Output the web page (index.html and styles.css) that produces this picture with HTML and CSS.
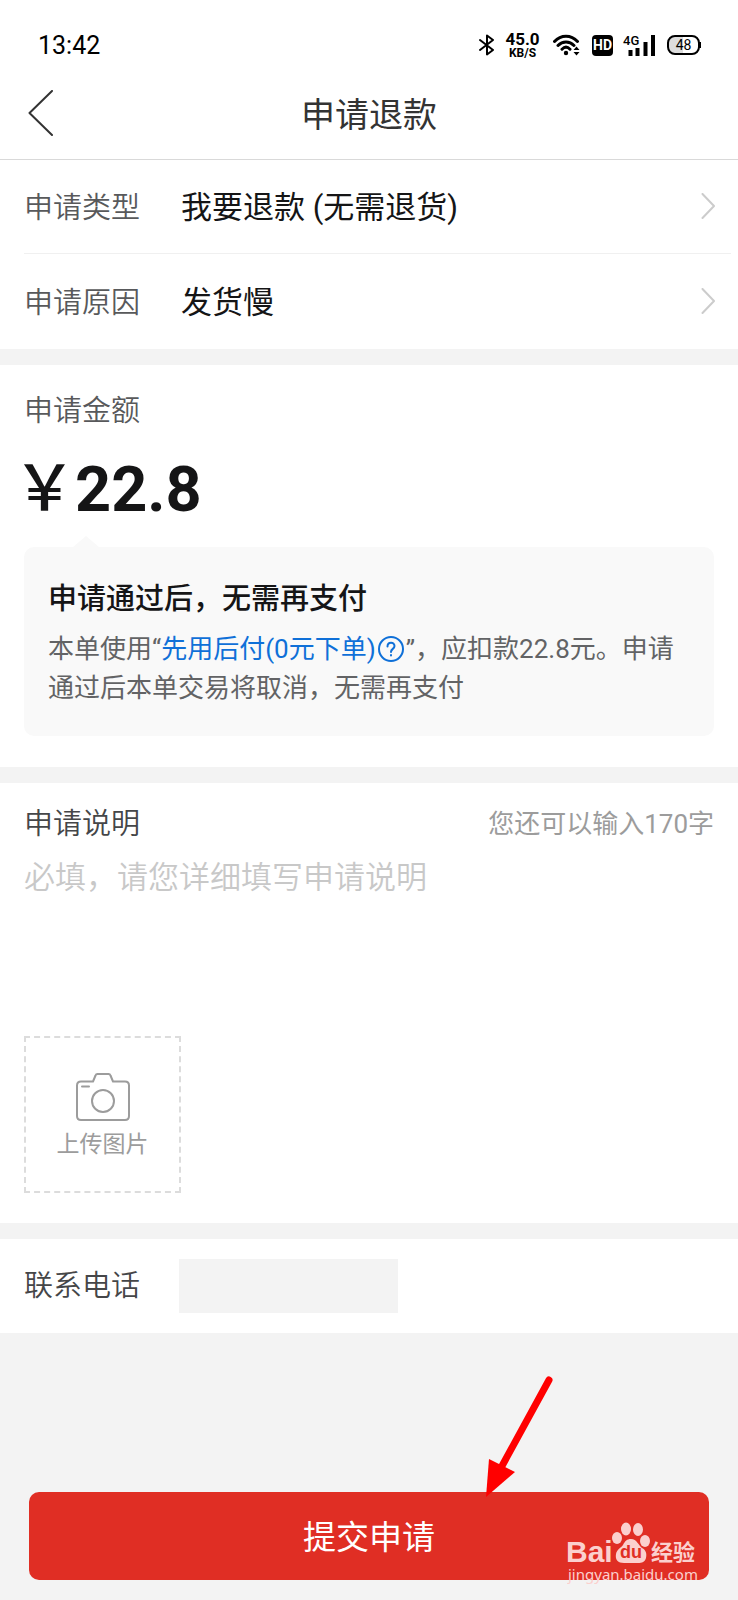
FILE: index.html
```html
<!DOCTYPE html>
<html lang="zh-CN">
<head>
<meta charset="utf-8">
<meta name="viewport" content="width=device-width, initial-scale=1">
<title>申请退款</title>
<link rel="stylesheet" href="styles.css">
</head>
<body>
<form class="page">
  <div class="status">
    <time class="clock">13:42</time>
    <div class="indicators">
      <svg class="bluetooth" width="16" height="22" viewBox="0 0 16 22" aria-label="蓝牙"><path d="M1 6l13 10-6 4.500V1.500L14 6 1 16" /></svg>
      <div class="speed"><span class="speed-value">45.0</span><span class="speed-unit">KB/S</span></div>
      <svg class="wifi" width="28" height="22" viewBox="0 0 28 22" aria-label="无线网络"><path class="arc" d="M1.500 7.500C8 .5 18 .5 24.500 7.500M5 11.500c4.500-4.800 11.500-4.800 16 0M9 15.200c2.500-2.500 5.500-2.500 8 0"/><circle cx="13" cy="19" r="2.200"/><path d="M20.500 16l3-3.500 3 3.500zM20.500 18l3 3.500 3-3.500z"/></svg>
      <span class="hd">HD</span>
      <div class="signal">
        <span class="network">4G</span>
        <svg width="30" height="22" viewBox="0 0 30 22" aria-label="信号"><path d="M5.500 16v6M12.500 14v8M20.500 8v14M28 1v21"/></svg>
      </div>
      <div class="battery"><span>48</span></div>
    </div>
  </div>

  <header class="header">
    <button class="back" type="button" aria-label="返回"><svg width="26" height="46" viewBox="0 0 26 46"><path d="M24 1L1.500 23 24 45"/></svg></button>
    <h1 class="title">申请退款</h1>
  </header>

  <section class="panel options">
    <button class="row" type="button">
      <span class="label">申请类型</span><span class="value">我要退款 (无需退货)</span>
      <svg class="chevron" width="14" height="26" viewBox="0 0 14 26"><path d="M1.500 1L13 13 1.500 25"/></svg>
    </button>
    <button class="row" type="button">
      <span class="label">申请原因</span><span class="value">发货慢</span>
      <svg class="chevron" width="14" height="26" viewBox="0 0 14 26"><path d="M1.500 1L13 13 1.500 25"/></svg>
    </button>
  </section>

  <section class="panel amount">
    <h2 class="label">申请金额</h2>
    <p class="price"><span class="yen">￥</span><span>22.8</span></p>
    <div class="notice">
      <h3 class="notice-title">申请通过后，无需再支付</h3>
      <p class="notice-text">本单使用“<a class="link" href="#">先用后付(0元下单)<svg class="help" width="26" height="26" viewBox="0 0 26 26" aria-label="说明"><circle cx="13" cy="13" r="12"/><path d="M9.500 10.500c0-5 7-5 7-.5 0 3-3.500 2.800-3.500 6M13 19v.5"/></svg></a>”，应扣款22.8元。申请通过后本单交易将取消，无需再支付</p>
    </div>
  </section>

  <section class="panel description">
    <div class="description-head">
      <label class="label dark" for="reason">申请说明</label>
      <span class="counter">您还可以输入170字</span>
    </div>
    <textarea class="reason" id="reason" maxlength="170" placeholder="必填，请您详细填写申请说明"></textarea>
    <button class="upload" type="button">
      <svg width="54" height="48" viewBox="0 0 54 48"><path d="M5 8.500h12l2.500-6Q20 1 21.500 1h11Q34 1 34.500 2.500l2.500 6h12q4 0 4 4V43q0 4-4 4H5q-4 0-4-4V12.500q0-4 4-4z"/><circle cx="27" cy="28" r="11"/><path d="M6 13.500h7"/></svg>
      <span>上传图片</span>
    </button>
  </section>

  <section class="panel contact">
    <label class="label dark" for="phone">联系电话</label>
    <input class="phone" id="phone" type="tel">
  </section>

  <footer class="footer">
    <button class="submit" type="submit">提交申请</button>
    <svg class="pointer" width="68" height="124" viewBox="0 0 68 124"><path class="shaft" d="M63 6L16 92"/><path d="M0 123L3 85l26 13z"/></svg>
    <svg class="watermark" width="134" height="68" viewBox="0 0 134 68" aria-label="Baidu 经验">
      <g class="paw"><ellipse cx="50" cy="17" rx="5" ry="6"/><ellipse cx="59" cy="8" rx="5" ry="6.500"/><ellipse cx="71" cy="8.500" rx="5" ry="6.500"/><ellipse cx="78" cy="20" rx="5" ry="6"/><path d="M64 18c6 0 7 6 11 9 4 2 5 6 4 10-1 4-4 5-8 5H57c-6 0-9-3-8-9 1-5 5-6 7-9 2-4 4-6 8-6z"/></g>
      <text class="wm-bai" x="-1" y="41">Bai</text>
      <text class="wm-du" x="64" y="37">du</text>
      <text class="wm-cn" x="84" y="39">经验</text>
      <text class="wm-url" x="1" y="59">jingyan.baidu.com</text>
    </svg>
  </footer>
</form>
</body>
</html>
```
FILE: styles.css
```css
* { box-sizing: border-box; }
body, h1, h2, h3, p { margin: 0; font-weight: 400; }
body {
  background: #f3f3f3;
  color: #151516;
  font-family: Roboto, "Noto Sans CJK SC", sans-serif;
}
button, input, textarea {
  padding: 0;
  border: 0;
  background: none;
  color: inherit;
  font-family: inherit;
}
svg { display: block; flex: none; fill: none; stroke-linecap: round; stroke-linejoin: round; }
.page { display: flex; flex-direction: column; gap: 16px; min-height: 100vh; }
.panel { background: #fff; padding: 0 24px; }

.status {
  display: flex;
  align-items: center;
  justify-content: space-between;
  height: 70px;
  margin-bottom: -16px;
  padding: 20px 38px 0;
  background: #fff;
  color: #000;
}
.clock { font-size: 25px; }
.indicators { display: flex; align-items: center; gap: 11px; }
.bluetooth { stroke: #000; stroke-width: 2; }
.speed { display: flex; flex-direction: column; align-items: center; width: 33px; font-weight: 700; }
.speed-value { font-size: 17px; line-height: 15px; }
.speed-unit { font-size: 12px; line-height: 12px; }
.wifi { margin-left: 3px; fill: #000; }
.arc { fill: none; stroke: #000; stroke-width: 3; }
.hd {
  width: 21px;
  border-radius: 4px;
  background: #000;
  color: #fff;
  font-size: 14px;
  font-weight: 700;
  line-height: 21px;
  text-align: center;
}
.signal { position: relative; margin: 0 1px; }
.signal svg { stroke: #000; stroke-width: 4; stroke-linecap: butt; }
.network { position: absolute; left: -2px; top: 0; font-size: 13px; line-height: 14px; font-weight: 500; }
.battery {
  position: relative;
  width: 33px;
  border: 2px solid #000;
  border-radius: 8px;
  background: linear-gradient(90deg, #ddd 48%, #fff 48%);
  font-size: 14px;
  line-height: 16px;
  text-align: center;
}
.battery::after {
  content: "";
  position: absolute;
  right: -3px;
  top: 5px;
  width: 2px;
  height: 6px;
  background: #000;
}

.header {
  display: grid;
  grid-template-columns: 80px 1fr 80px;
  align-items: center;
  height: 90px;
  margin-bottom: -16px;
  border-bottom: 1px solid #d9d9d9;
  background: #fff;
}
.back { justify-self: start; padding: 0 24px 4px 28px; }
.back svg { stroke: #333; stroke-width: 2; }
.title { color: #333; font-size: 34px; line-height: 50px; text-align: center; }

.label { color: #58595b; font-size: 29px; font-weight: 350; line-height: 40px; text-align: left; }
.dark { color: #454648; }
.options { padding-right: 0; }
.row {
  display: grid;
  grid-template-columns: 157px 1fr auto;
  align-items: center;
  width: 100%;
  height: 94px;
  padding-top: 2px;
  padding-right: 23px;
}
.row + .row { height: 95px; position: relative; }
.row + .row::before {
  content: "";
  position: absolute;
  inset: -1px 7px auto 0;
  height: 1px;
  background: #f0f0f0;
}
.value { font-size: 31px; line-height: 44px; text-align: left; }
.chevron { margin-bottom: 4px; stroke: #ccc; stroke-width: 2; }

.amount { padding-top: 26px; padding-bottom: 31px; }
.price {
  display: flex;
  align-items: center;
  height: 78px;
  margin: 19px 0;
  font-size: 63px;
  font-weight: 700;
}
.yen {
  display: flex;
  justify-content: center;
  width: 41px;
  margin-right: 10px;
  font-weight: 500;
  line-height: 78px;
}
.notice {
  position: relative;
  padding: 32px 24px 28px;
  border-radius: 10px;
  background: #f9f9f9;
}
.notice::before {
  content: "";
  position: absolute;
  left: 49px;
  top: -11px;
  border: solid transparent;
  border-width: 0 13px 11px;
  border-bottom-color: #f9f9f9;
}
.notice-title { font-size: 29px; font-weight: 500; line-height: 40px; }
.notice-text { margin-top: 11px; color: #626365; font-size: 26px; line-height: 39px; }
.link { color: #0f70d8; text-decoration: none; }
.help {
  display: inline-block;
  margin: 0 2px;
  vertical-align: -4px;
  stroke: currentColor;
  stroke-width: 2;
}

.description { padding-top: 21px; padding-bottom: 30px; }
.description-head { display: flex; align-items: center; justify-content: space-between; }
.counter { color: #9c9c9c; font-size: 26px; line-height: 40px; }
.reason {
  display: block;
  width: 100%;
  height: 160px;
  margin: 12px 0 20px;
  outline: 0;
  font-size: 31px;
  font-weight: 350;
  line-height: 44px;
  resize: none;
}
.reason::placeholder { color: #c8c8c8; }
.upload {
  display: flex;
  flex-direction: column;
  align-items: center;
  justify-content: center;
  gap: 8px;
  width: 157px;
  height: 157px;
  padding-top: 5px;
  border: 2px dashed #dcdcdc;
  color: #9c9c9c;
  font-size: 23px;
  line-height: 32px;
}
.upload svg { stroke: #9c9c9c; stroke-width: 2; }

.contact { display: flex; align-items: center; height: 94px; }
.contact .label { width: 155px; }
.phone { width: 219px; height: 54px; background: #f3f3f3; font-size: 29px; }

.footer { position: relative; margin-top: auto; padding: 0 29px 20px; }
.submit {
  display: block;
  width: 100%;
  height: 88px;
  padding-bottom: 3px;
  border-radius: 10px;
  background: #e02e24;
  color: #fff;
  font-size: 33px;
}
.pointer { position: absolute; right: 184px; bottom: 102px; fill: #f00; }
.shaft { stroke: #f00; stroke-width: 7; }
.watermark { position: absolute; right: 37px; bottom: 11px; fill: #fbd0ce; }
.wm-bai { font: 700 30px "Liberation Sans", sans-serif; }
.wm-du { fill: #e02e24; font: 700 18px "Liberation Sans", sans-serif; text-anchor: middle; }
.wm-cn { font: 700 22px "Noto Sans CJK SC", sans-serif; }
.wm-url { font: 15px "Noto Sans", sans-serif; }
```
